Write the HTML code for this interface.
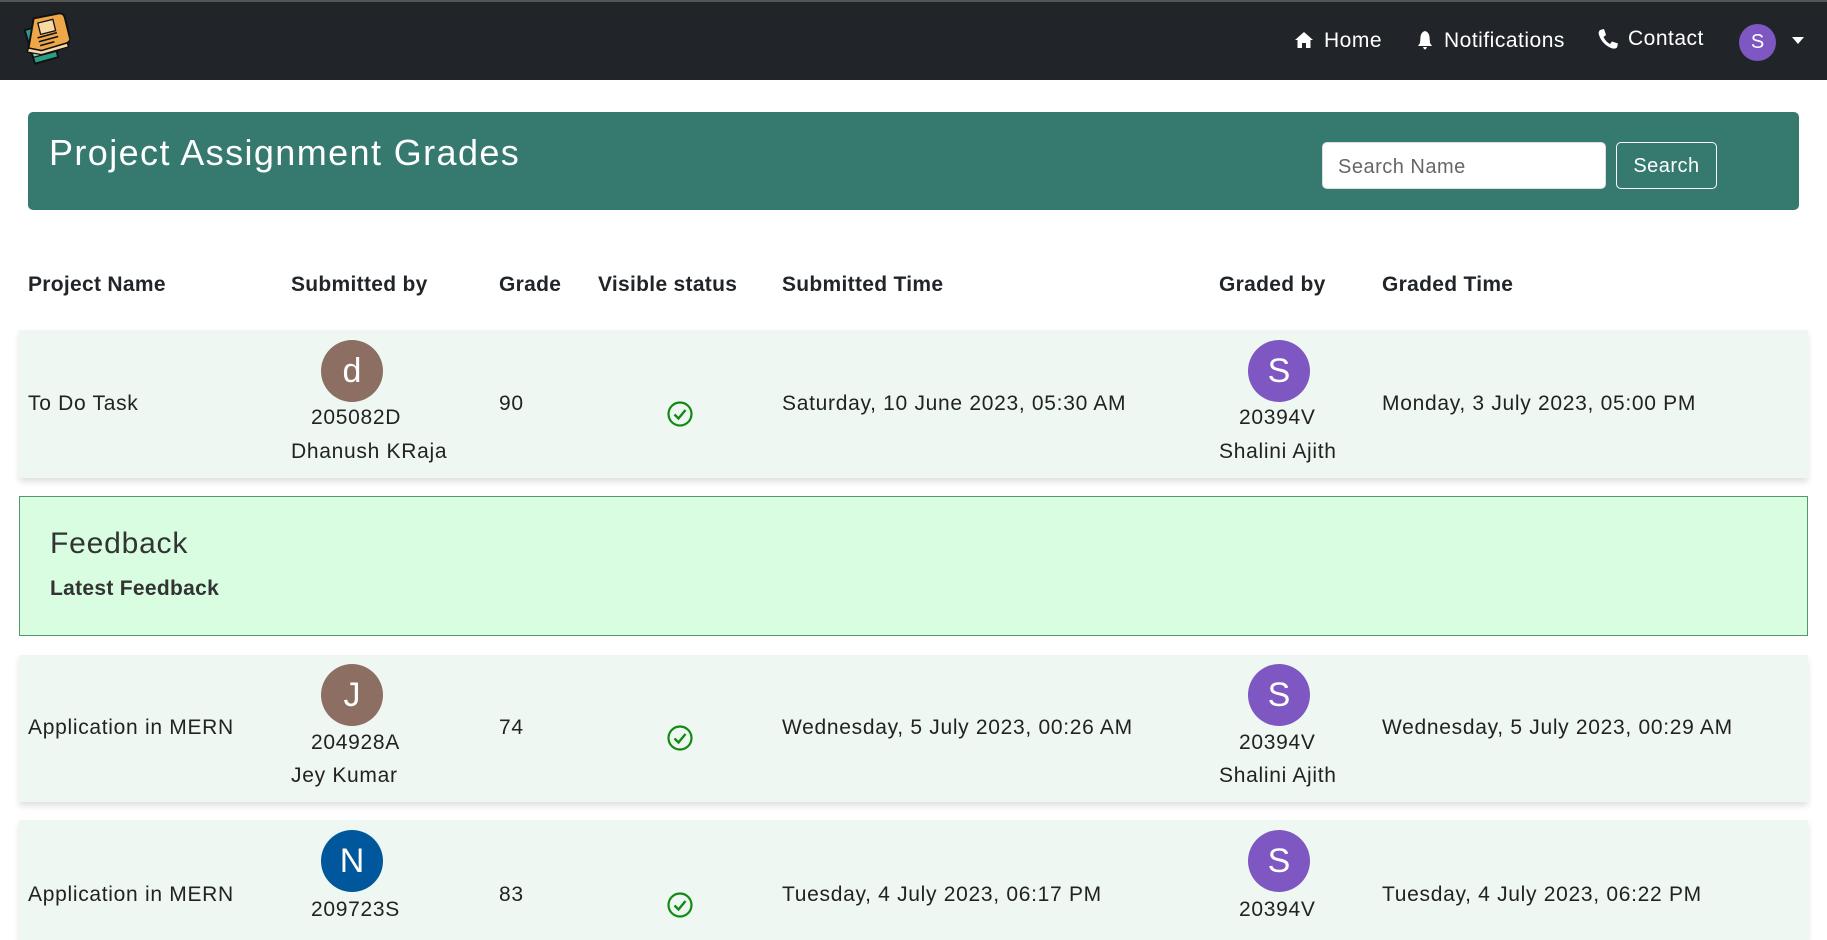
<!DOCTYPE html>
<html><head><meta charset="utf-8"><style>
*{margin:0;padding:0;box-sizing:border-box}
body{width:1827px;height:926px;overflow:hidden;background:#fff;font-family:"Liberation Sans",sans-serif;color:#222;position:relative}
.a{position:absolute;white-space:nowrap}
.nav{position:absolute;left:0;top:0;width:1827px;height:80px;background:#212529;border-top:2px solid #555}
.nt{color:#fff;font-size:21px;top:27px;letter-spacing:.5px}
.banner{position:absolute;left:28px;top:112px;width:1771px;height:98px;background:#35796f;border-radius:5px}
.th{font-size:21px;font-weight:bold;top:273px;color:#212529;letter-spacing:.3px}
.row{position:absolute;left:19px;width:1789px;background:#eef7f1;box-shadow:0 4px 6px rgba(0,0,0,.12)}
.av{position:absolute;width:62px;height:62px;border-radius:50%;color:#fff;font-size:34px;text-align:center;line-height:62px}
.td{font-size:21px;color:#222;letter-spacing:.7px}
.fb{position:absolute;left:19px;top:496px;width:1789px;height:140px;background:#d8fde0;border:1px solid #4f9a68}
</style></head><body>
<div class="nav">
<svg class="a" style="left:18px;top:10px" width="52" height="62" viewBox="0 0 40 48">
<path d="M5 14 L24 9 L31 35 L13 40 Z" fill="#2a9d84" stroke="#111" stroke-width="1.5"/>
<path d="M10 30 L30 25 L31 30 L12 35 Z" fill="#8fd9c6" stroke="#111" stroke-width="1"/>
<path d="M12 5 L32 1 Q35 1 36 4 L40 20 Q41 22 38 24 L18 30 L8 28 Z" fill="#eea84a" stroke="#111" stroke-width="1.5"/>
<path d="M8 28 L18 30 L38 24 L39 27 L18 33 L7 31 Z" fill="#f6d9a6" stroke="#111" stroke-width="1"/>
<rect x="16" y="7" width="12" height="9" transform="rotate(-14 22 11)" fill="#f8d9a4" stroke="#111" stroke-width="1"/>
<path d="M15 20 L30 16 M16 23 L31 19 M17 26 L28 23" stroke="#111" stroke-width="1.2"/>
</svg>
<svg class="a" style="left:1294px;top:29px" width="20" height="18" viewBox="0 0 20 18"><path d="M10 1 L19 9 L16.5 9 L16.5 17 L12 17 L12 12 L8 12 L8 17 L3.5 17 L3.5 9 L1 9 Z" fill="#fff"/></svg>
<div class="a nt" style="left:1324px">Home</div>
<svg class="a" style="left:1417px;top:28px" width="16" height="20" viewBox="0 0 16 20"><path d="M8 1 Q12 2 12.5 7 L13 13 L15 16 L1 16 L3 13 L3.5 7 Q4 2 8 1 Z M6 17 L10 17 Q9 19.5 8 19.5 Q7 19.5 6 17 Z" fill="#fff"/></svg>
<div class="a nt" style="left:1444px">Notifications</div>
<svg class="a" style="left:1597px;top:26px" width="22" height="22" viewBox="0 0 22 22"><path d="M3 2 L7 1 L9 7 L6.5 9 Q9 14 13 16 L15 13.5 L21 15.5 L20 19.5 Q18 21.5 14 20 Q5 16 2 7 Q1 4 3 2 Z" fill="#fff"/></svg>
<div class="a nt" style="left:1628px;top:25px">Contact</div>
<div class="av" style="left:1739px;top:22px;width:37px;height:37px;line-height:37px;font-size:20px;background:#7e57c2">S</div>
<svg class="a" style="left:1792px;top:35px" width="12" height="8"><path d="M0 0 L12 0 L6 7 Z" fill="#fff"/></svg>
</div>
<div class="banner"></div>
<div class="a" style="left:49px;top:132px;font-size:36px;color:#fff;letter-spacing:1.4px">Project Assignment Grades</div>
<div class="a" style="left:1322px;top:142px;width:284px;height:47px;background:#fff;border-radius:5px;border:1px solid #ddd;font-size:20px;color:#666;padding:13px 15px;letter-spacing:.5px">Search Name</div>
<div class="a" style="left:1616px;top:142px;width:101px;height:47px;border:1px solid #fff;border-radius:5px;color:#fff;font-size:20px;text-align:center;line-height:47px;letter-spacing:.5px">Search</div>

<div class="a th" style="left:28px">Project Name</div>
<div class="a th" style="left:291px">Submitted by</div>
<div class="a th" style="left:499px">Grade</div>
<div class="a th" style="left:598px">Visible status</div>
<div class="a th" style="left:782px">Submitted Time</div>
<div class="a th" style="left:1219px">Graded by</div>
<div class="a th" style="left:1382px">Graded Time</div>

<!-- row 1 -->
<div class="row" style="top:330px;height:148px"></div>
<div class="av" style="left:321px;top:340px;background:#8d6e63">d</div>
<div class="a td" style="left:28px;top:392px">To Do Task</div>
<div class="a td" style="left:311px;top:406px">205082D</div>
<div class="a td" style="left:291px;top:440px">Dhanush KRaja</div>
<div class="a td" style="left:499px;top:392px">90</div>
<svg class="a" style="left:666px;top:400px" width="28" height="28" viewBox="0 0 28 28"><circle cx="14" cy="14" r="11.5" fill="none" stroke="#138a13" stroke-width="2.2"/><path d="M8.5 14.5 L12.5 18.5 L19.5 10" fill="none" stroke="#138a13" stroke-width="2.4"/></svg>
<div class="a td" style="left:782px;top:392px">Saturday, 10 June 2023, 05:30 AM</div>
<div class="av" style="left:1248px;top:340px;background:#7e57c2">S</div>
<div class="a td" style="left:1239px;top:406px">20394V</div>
<div class="a td" style="left:1219px;top:440px">Shalini Ajith</div>
<div class="a td" style="left:1382px;top:392px">Monday, 3 July 2023, 05:00 PM</div>

<div class="fb"></div>
<div class="a" style="left:50px;top:527px;font-size:30px;color:#333;letter-spacing:.8px">Feedback</div>
<div class="a" style="left:50px;top:577px;font-size:21px;font-weight:bold;color:#333;letter-spacing:.3px">Latest Feedback</div>

<!-- row 2 -->
<div class="row" style="top:655px;height:147px"></div>
<div class="av" style="left:321px;top:664px;background:#8d6e63">J</div>
<div class="a td" style="left:28px;top:716px">Application in MERN</div>
<div class="a td" style="left:311px;top:731px">204928A</div>
<div class="a td" style="left:291px;top:764px">Jey Kumar</div>
<div class="a td" style="left:499px;top:716px">74</div>
<svg class="a" style="left:666px;top:724px" width="28" height="28" viewBox="0 0 28 28"><circle cx="14" cy="14" r="11.5" fill="none" stroke="#138a13" stroke-width="2.2"/><path d="M8.5 14.5 L12.5 18.5 L19.5 10" fill="none" stroke="#138a13" stroke-width="2.4"/></svg>
<div class="a td" style="left:782px;top:716px">Wednesday, 5 July 2023, 00:26 AM</div>
<div class="av" style="left:1248px;top:664px;background:#7e57c2">S</div>
<div class="a td" style="left:1239px;top:731px">20394V</div>
<div class="a td" style="left:1219px;top:764px">Shalini Ajith</div>
<div class="a td" style="left:1382px;top:716px">Wednesday, 5 July 2023, 00:29 AM</div>

<!-- row 3 -->
<div class="row" style="top:820px;height:120px"></div>
<div class="av" style="left:321px;top:830px;background:#01579b">N</div>
<div class="a td" style="left:28px;top:883px">Application in MERN</div>
<div class="a td" style="left:311px;top:898px">209723S</div>
<div class="a td" style="left:499px;top:883px">83</div>
<svg class="a" style="left:666px;top:891px" width="28" height="28" viewBox="0 0 28 28"><circle cx="14" cy="14" r="11.5" fill="none" stroke="#138a13" stroke-width="2.2"/><path d="M8.5 14.5 L12.5 18.5 L19.5 10" fill="none" stroke="#138a13" stroke-width="2.4"/></svg>
<div class="a td" style="left:782px;top:883px">Tuesday, 4 July 2023, 06:17 PM</div>
<div class="av" style="left:1248px;top:830px;background:#7e57c2">S</div>
<div class="a td" style="left:1239px;top:898px">20394V</div>
<div class="a td" style="left:1382px;top:883px">Tuesday, 4 July 2023, 06:22 PM</div>
</body></html>
